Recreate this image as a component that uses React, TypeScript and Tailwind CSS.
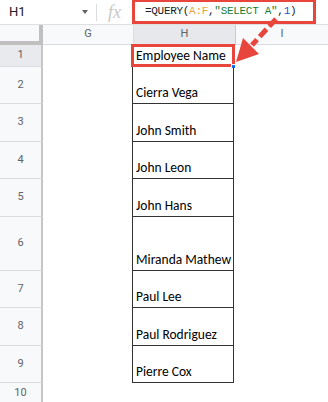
import React from "react";

const rows = [
  { n: "1", h: 22, name: "Employee Name", active: true },
  { n: "2", h: 37, name: "Cierra Vega" },
  { n: "3", h: 38, name: "John Smith" },
  { n: "4", h: 37, name: "John Leon" },
  { n: "5", h: 38, name: "John Hans" },
  { n: "6", h: 54, name: "Miranda Mathew" },
  { n: "7", h: 37, name: "Paul Lee" },
  { n: "8", h: 38, name: "Paul Rodriguez" },
  { n: "9", h: 37, name: "Pierre Cox" },
];

const ui = { fontFamily: "Roboto, 'Liberation Sans', sans-serif" };
const cell = { fontFamily: "Carlito, Lato, 'Liberation Sans', sans-serif" };

function Arrow() {
  return (
    <svg className="absolute left-0 top-0 pointer-events-none" width="328" height="402" viewBox="0 0 328 402">
      <line x1="276" y1="19" x2="252" y2="45" stroke="#e8453c" strokeWidth="5" strokeDasharray="10 4" />
      <polygon points="236,62 259,54 243,38" fill="#e8453c" />
    </svg>
  );
}

export default function App() {
  return (
    <div className="relative w-[328px] h-[402px] overflow-hidden bg-white">
      {/* formula bar */}
      <div className="flex h-[25px] border-b border-[#e0e0e0] items-center" style={ui}>
        <div className="w-[96px] h-full flex items-center pl-[9px] pr-[8px] justify-between">
          <span className="text-[13px] text-[#202124]">H1</span>
          <span className="w-0 h-0 border-l-[3px] border-r-[3px] border-t-[4px] border-l-transparent border-r-transparent border-t-[#5f6368]" />
        </div>
        <div className="w-px h-[17px] bg-[#dadce0]" />
        <div className="w-[35px] flex justify-center">
          <span className="text-[18px] italic text-[#c8c8c8] leading-none" style={{ fontFamily: "'Liberation Serif', serif" }}>fx</span>
        </div>
        <div className="w-[184px] h-[25px] border-[3px] border-[#e8453c] flex items-center pl-[10px] -mt-[1px]">
          <span className="text-[11px] tracking-[-0.3px] text-[#202124] whitespace-pre" style={{ fontFamily: "'Liberation Mono', monospace" }}>
            =QUERY(<span className="text-[#e8a33b]">A:F</span>,<span className="text-[#188038]">"SELECT A"</span>,<span className="text-[#1a56c9]">1</span>)
          </span>
        </div>
      </div>

      {/* column headers */}
      <div className="flex h-[20px] text-[11px] text-[#5f6368]" style={ui}>
        <div className="w-[43px] bg-[#f8f9fa] border-r-[4px] border-b-[4px] border-[#c0c0c0]" />
        <div className="w-[91px] bg-[#f8f9fa] border-r border-b border-[#dadce0] flex items-center justify-center">G</div>
        <div className="w-[102px] bg-[#e6e8eb] border-r border-b border-[#c8cacd] flex items-center justify-center">H</div>
        <div className="flex-1 bg-[#f8f9fa] border-b border-[#dadce0] flex items-center justify-center">I</div>
      </div>

      {rows.map((r) => (
        <div key={r.n} className="flex" style={{ height: r.h }}>
          <div
            className={`w-[43px] border-r-[2px] border-r-[#c4c7c5] border-b border-b-[#dadce0] flex items-center justify-center text-[11px] text-[#5f6368] ${r.active ? "bg-[#e8eaed]" : "bg-[#f8f9fa]"}`}
            style={ui}
          >
            {r.n}
          </div>
          <div className="w-[89px]" />
          <div className="relative w-[102px] border-x border-b border-[#333] flex items-end pl-[3px] pb-[1px] text-[13.5px] text-black leading-[18px]" style={cell}>
            {r.name}
            {r.active && (
              <>
                <div className="absolute -left-[2px] -top-[1px] -right-[2px] -bottom-[1px] border-[3px] border-[#e8453c]" />
                <div className="absolute -right-[3px] -bottom-[3px] w-[5px] h-[5px] bg-[#1a73e8] border border-white" />
              </>
            )}
          </div>
          <div className="flex-1" />
        </div>
      ))}

      <div className="flex h-[20px]">
        <div className="w-[43px] border-r-[2px] border-r-[#c4c7c5] bg-[#f8f9fa] flex items-center justify-center text-[11px] text-[#5f6368]" style={ui}>
          10
        </div>
      </div>

      <Arrow />
    </div>
  );
}
